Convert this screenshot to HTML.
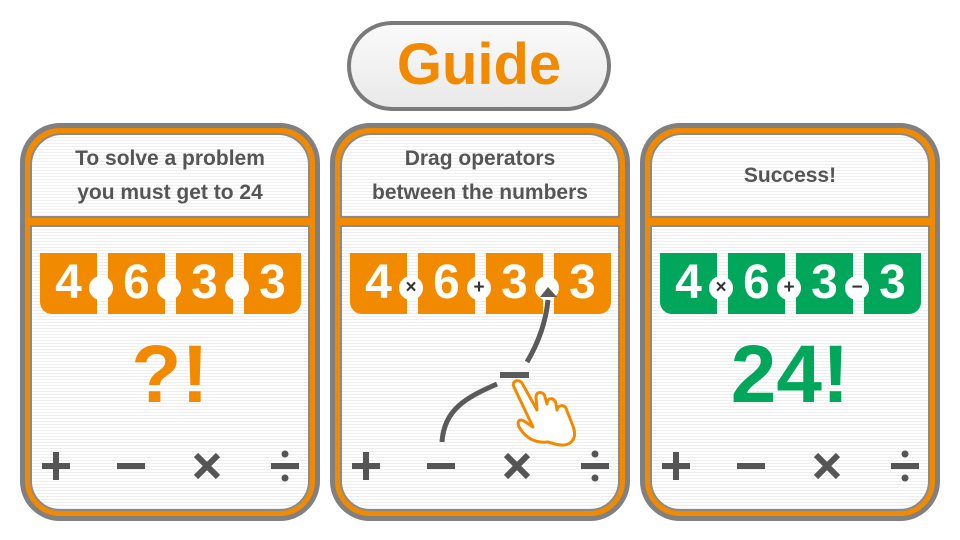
<!DOCTYPE html><html><head><style>
*{margin:0;padding:0;box-sizing:border-box}
body{width:960px;height:540px;background:#fff;position:relative;overflow:hidden;font-family:"Liberation Sans","DejaVu Sans",sans-serif}
.abs{position:absolute}
.pill{left:347px;top:21px;width:264px;height:90px;border:4px solid #7a7a7a;border-radius:45px;background:linear-gradient(#fafafa,#e9e9e9);text-align:center;color:#f28a00;font-weight:bold;font-size:58px;line-height:80px}
.panel{top:123px;width:300px;height:398px;border:5px solid #808080;border-radius:40px;background:#f28a00;padding:5px}
.hdr{position:absolute;left:5px;top:5px;right:5px;height:85px;border:2px solid #8a8a8a;border-radius:32px 32px 0 0;background:repeating-linear-gradient(#fff 0 2px,#f0f0f0 2px 3px);color:#555;font-weight:bold;font-size:21px;text-align:center;display:flex;align-items:center;justify-content:center;line-height:34px}
.bd{position:absolute;left:5px;top:97px;right:5px;bottom:5px;border:2px solid #8a8a8a;border-radius:0 0 30px 30px;background:repeating-linear-gradient(#fff 0 2px,#eeeeee 2px 3px)}
.tile{position:absolute;top:125px;width:57px;height:61px;color:#fff;font-weight:bold;font-size:48px;text-align:center;line-height:60px}
.c{position:absolute;top:148px;width:24px;height:24px;border-radius:50%;background:#fff;color:#333;font-weight:bold;font-size:19px;line-height:23px;text-align:center}
.big{position:absolute;left:0;right:0;top:205px;text-align:center;font-weight:bold;font-size:82px;line-height:84px}
</style></head><body>
<div class="abs pill">Guide</div>

<div class="abs panel" style="left:20px">
 <div class="hdr">To solve a problem<br>you must get to 24</div>
 <div class="bd"></div>
 <div class="tile" style="left:15px;background:#f28a00;border-radius:0 0 0 12px">4</div>
 <div class="tile" style="left:83px;background:#f28a00">6</div>
 <div class="tile" style="left:151px;background:#f28a00">3</div>
 <div class="tile" style="left:219px;background:#f28a00;border-radius:0 0 12px 0">3</div>
 <div class="c" style="left:64px"></div><div class="c" style="left:132px"></div><div class="c" style="left:200px"></div>
 <div class="big" style="color:#f28a00">?!</div>
</div>

<div class="abs panel" style="left:330px">
 <div class="hdr">Drag operators<br>between the numbers</div>
 <div class="bd"></div>
 <div class="tile" style="left:15px;background:#f28a00;border-radius:0 0 0 12px">4</div>
 <div class="tile" style="left:83px;background:#f28a00">6</div>
 <div class="tile" style="left:151px;background:#f28a00">3</div>
 <div class="tile" style="left:219px;background:#f28a00;border-radius:0 0 12px 0">3</div>
 <div class="c" style="left:64px">×</div><div class="c" style="left:132px">+</div><div class="c" style="left:200px"></div>
</div>

<div class="abs panel" style="left:640px">
 <div class="hdr">Success!</div>
 <div class="bd"></div>
 <div class="tile" style="left:15px;background:#00a75a;border-radius:0 0 0 12px">4</div>
 <div class="tile" style="left:83px;background:#00a75a">6</div>
 <div class="tile" style="left:151px;background:#00a75a">3</div>
 <div class="tile" style="left:219px;background:#00a75a;border-radius:0 0 12px 0">3</div>
 <div class="c" style="left:64px">×</div><div class="c" style="left:132px">+</div><div class="c" style="left:200px">−</div>
 <div class="big" style="color:#00a75a">24!</div>
</div>

<svg class="abs" style="left:0;top:0" width="960" height="540">
 <defs>
  <g id="ops" stroke="#555" stroke-width="6" fill="#555">
   <path d="M42 466 H70 M56 452 V480"/>
   <path d="M117 466 H145"/>
   <path d="M196 455 L218 477 M218 455 L196 477"/>
   <path d="M271 466 H299" />
   <circle cx="285" cy="454" r="3.5" stroke="none"/>
   <circle cx="285" cy="478" r="3.5" stroke="none"/>
  </g>
 </defs>
 <use href="#ops"/>
 <use href="#ops" x="310"/>
 <use href="#ops" x="620"/>
 <path d="M442 442 C444 410 465 398 497 384" stroke="#5a5a5a" stroke-width="5" fill="none"/>
 <path d="M527 362 C540 340 546 320 548 300" stroke="#5a5a5a" stroke-width="5" fill="none"/>
 <path d="M540 297 L548 287 L557 297 Z" fill="#5a5a5a"/>
 <rect x="500" y="372" width="29" height="6" fill="#5a5a5a"/>
 <path d="M514 387 C511 382 518 378 522 383 L537 410 L536 397 C536 391 544 391 545 397 L547 404 C547 397 555 397 556 404 L557 410 C558 404 566 404 567 411 L573 426 C578 440 570 448 555 444 L548 442 C538 443 528 440 521 430 C516 423 518 418 524 421 L533 427 Z" fill="#fff" stroke="#f28a00" stroke-width="3" stroke-linejoin="round"/>
</svg>
</body></html>
